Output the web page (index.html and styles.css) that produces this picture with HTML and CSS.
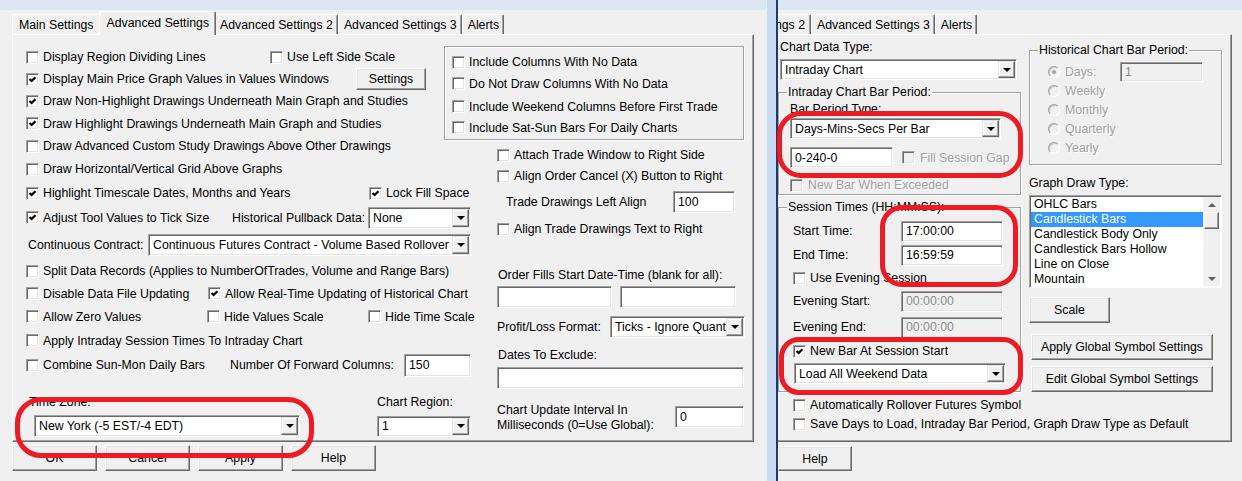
FILE: index.html
```html
<!DOCTYPE html>
<html lang="en">
<head>
    <meta charset="UTF-8">
    <meta name="viewport" content="width=device-width, initial-scale=1.0">
    <title>Chart Settings</title>
    <link rel="stylesheet" href="styles.css">
</head>
<body>
<div class="screen">
    <!-- left window: Advanced Settings tab -->
    <div class="dialog dlg-left">
        <div class="frame-top"></div>
        <div class="body">
            <div class="tabs">
                <div class="tab">Main Settings</div>
                <div class="tab active">Advanced Settings</div>
                <div class="tab">Advanced Settings 2</div>
                <div class="tab">Advanced Settings 3</div>
                <div class="tab">Alerts</div>
            </div>
            <div class="panel">
                <div class="col-a">
                    <div class="row">
                        <label class="chk w-dividing"><span class="cb"></span>Display Region Dividing Lines</label>
                        <label class="chk"><span class="cb"></span>Use Left Side Scale</label>
                    </div>
                    <div class="row">
                        <label class="chk w-values"><span class="cb"><svg viewBox="0 0 7 7"><polyline points="0.6,3 2.6,5 6.4,1.2"/></svg></span>Display Main Price Graph Values in Values Windows</label>
                        <div class="btn btn-settings">Settings</div>
                    </div>
                    <div class="row">
                        <label class="chk"><span class="cb"><svg viewBox="0 0 7 7"><polyline points="0.6,3 2.6,5 6.4,1.2"/></svg></span>Draw Non-Highlight Drawings Underneath Main Graph and Studies</label>
                    </div>
                    <div class="row">
                        <label class="chk"><span class="cb"><svg viewBox="0 0 7 7"><polyline points="0.6,3 2.6,5 6.4,1.2"/></svg></span>Draw Highlight Drawings Underneath Main Graph and Studies</label>
                    </div>
                    <div class="row">
                        <label class="chk"><span class="cb"></span>Draw Advanced Custom Study Drawings Above Other Drawings</label>
                    </div>
                    <div class="row">
                        <label class="chk"><span class="cb"></span>Draw Horizontal/Vertical Grid Above Graphs</label>
                    </div>
                    <div class="row">
                        <label class="chk w-timescale"><span class="cb"><svg viewBox="0 0 7 7"><polyline points="0.6,3 2.6,5 6.4,1.2"/></svg></span>Highlight Timescale Dates, Months and Years</label>
                        <label class="chk"><span class="cb"><svg viewBox="0 0 7 7"><polyline points="0.6,3 2.6,5 6.4,1.2"/></svg></span>Lock Fill Space</label>
                    </div>
                    <div class="row">
                        <label class="chk w-tick"><span class="cb"><svg viewBox="0 0 7 7"><polyline points="0.6,3 2.6,5 6.4,1.2"/></svg></span>Adjust Tool Values to Tick Size</label>
                        <span class="w-pullback">Historical Pullback Data:</span>
                        <div class="combo combo-pullback"><span class="combo-text">None</span><span class="combo-btn"></span></div>
                    </div>
                    <div class="row">
                        <span class="w-contract">Continuous Contract:</span>
                        <div class="combo combo-contract"><span class="combo-text">Continuous Futures Contract - Volume Based Rollover</span><span class="combo-btn"></span></div>
                    </div>
                    <div class="row">
                        <label class="chk"><span class="cb"></span>Split Data Records (Applies to NumberOfTrades, Volume and Range Bars)</label>
                    </div>
                    <div class="row">
                        <label class="chk w-disable"><span class="cb"></span>Disable Data File Updating</label>
                        <label class="chk"><span class="cb"><svg viewBox="0 0 7 7"><polyline points="0.6,3 2.6,5 6.4,1.2"/></svg></span>Allow Real-Time Updating of Historical Chart</label>
                    </div>
                    <div class="row">
                        <label class="chk w-zero"><span class="cb"></span>Allow Zero Values</label>
                        <label class="chk w-hidevalues"><span class="cb"></span>Hide Values Scale</label>
                        <label class="chk"><span class="cb"></span>Hide Time Scale</label>
                    </div>
                    <div class="row">
                        <label class="chk"><span class="cb"></span>Apply Intraday Session Times To Intraday Chart</label>
                    </div>
                    <div class="row">
                        <label class="chk w-sunmon"><span class="cb"></span>Combine Sun-Mon Daily Bars</label>
                        <span class="w-forward">Number Of Forward Columns:</span>
                        <div class="field field-forward">150</div>
                    </div>
                    <div class="row row-labels">
                        <span class="w-timezone">Time Zone:</span>
                        <span>Chart Region:</span>
                    </div>
                    <div class="row">
                        <div class="combo combo-tz"><span class="combo-text">New York (-5 EST/-4 EDT)</span><span class="combo-btn"></span></div>
                        <div class="combo combo-region"><span class="combo-text">1</span><span class="combo-btn"></span></div>
                    </div>
                </div>

                <div class="col-b">
                    <div class="box-nodata">
                        <div class="row"><label class="chk"><span class="cb"></span>Include Columns With No Data</label></div>
                        <div class="row"><label class="chk"><span class="cb"></span>Do Not Draw Columns With No Data</label></div>
                        <div class="row"><label class="chk"><span class="cb"></span>Include Weekend Columns Before First Trade</label></div>
                        <div class="row"><label class="chk"><span class="cb"></span>Include Sat-Sun Bars For Daily Charts</label></div>
                    </div>
                    <div class="row ind53 pt5"><label class="chk"><span class="cb"></span>Attach Trade Window to Right Side</label></div>
                    <div class="row ind53"><label class="chk"><span class="cb"></span>Align Order Cancel (X) Button to Right</label></div>
                    <div class="row ind62">
                        <span class="w-leftalign">Trade Drawings Left Align</span>
                        <div class="field field-leftalign">100</div>
                    </div>
                    <div class="row ind53"><label class="chk"><span class="cb"></span>Align Trade Drawings Text to Right</label></div>
                    <div class="row row-bottom ind54">Order Fills Start Date-Time (blank for all):</div>
                    <div class="row ind53">
                        <div class="field field-fill1"></div>
                        <div class="field field-fill2"></div>
                    </div>
                    <div class="row ind53">
                        <span class="w-profit">Profit/Loss Format:</span>
                        <div class="combo combo-profit"><span class="combo-text">Ticks - Ignore Quantity</span><span class="combo-btn"></span></div>
                    </div>
                    <div class="row ind54">Dates To Exclude:</div>
                    <div class="row ind53"><div class="field field-dates"></div></div>
                    <div class="row row-top ind53">
                        <div class="w-interval">Chart Update Interval In<br>Milliseconds (0=Use Global):</div>
                        <div class="field field-interval">0</div>
                    </div>
                </div>
            </div>
            <div class="buttons">
                <div class="btn btn-main">OK</div>
                <div class="btn btn-main">Cancel</div>
                <div class="btn btn-main">Apply</div>
                <div class="btn btn-main">Help</div>
            </div>
        </div>
    </div>

    <div class="divider"></div>

    <!-- right window: Main Settings tab, cropped on the left -->
    <div class="dialog dlg-right">
        <div class="frame-top"></div>
        <div class="body">
            <div class="tabs">
                <div class="tab tab-cut"><span>Advanced Settings 2</span></div>
                <div class="tab">Advanced Settings 3</div>
                <div class="tab">Alerts</div>
            </div>
            <div class="panel">
                <div class="col-c">
                    <div class="row h22 ind2">Chart Data Type:</div>
                    <div class="combo combo-cdt"><span class="combo-text">Intraday Chart</span><span class="combo-btn"></span></div>

                    <div class="grp grp-intraday">
                        <span class="grp-title">Intraday Chart Bar Period:</span>
                        <div class="row h17 ind11">Bar Period Type:</div>
                        <div class="combo combo-bpt"><span class="combo-text">Days-Mins-Secs Per Bar</span><span class="combo-btn"></span></div>
                        <div class="row row-period ind11">
                            <div class="field field-period">0-240-0</div>
                            <label class="chk off"><span class="cb"></span>Fill Session Gap</label>
                        </div>
                        <div class="row row-exceeded ind11"><label class="chk off"><span class="cb"></span>New Bar When Exceeded</label></div>
                    </div>

                    <div class="grp grp-session">
                        <span class="grp-title">Session Times (HH:MM:SS):</span>
                        <div class="row h24 ind14 mt4"><span class="w-time">Start Time:</span><div class="field field-time">17:00:00</div></div>
                        <div class="row h24 ind14"><span class="w-time">End Time:</span><div class="field field-time">16:59:59</div></div>
                        <div class="row h22 ind14"><label class="chk"><span class="cb"></span>Use Evening Session</label></div>
                        <div class="row h24 ind14"><span class="w-time">Evening Start:</span><div class="field field-time off">00:00:00</div></div>
                        <div class="row h24 ind14 mt2"><span class="w-time">Evening End:</span><div class="field field-time off">00:00:00</div></div>
                        <div class="row h24 ind14"><label class="chk"><span class="cb"><svg viewBox="0 0 7 7"><polyline points="0.6,3 2.6,5 6.4,1.2"/></svg></span>New Bar At Session Start</label></div>
                        <div class="combo combo-weekend"><span class="combo-text">Load All Weekend Data</span><span class="combo-btn"></span></div>
                    </div>

                    <div class="row h18 ind15 mt4"><label class="chk"><span class="cb"></span>Automatically Rollover Futures Symbol</label></div>
                    <div class="row h20 ind15"><label class="chk"><span class="cb"></span>Save Days to Load, Intraday Bar Period, Graph Draw Type as Default</label></div>
                </div>

                <div class="col-d">
                    <div class="grp grp-hist">
                        <span class="grp-title">Historical Chart Bar Period:</span>
                        <div class="radios">
                            <div class="row h19 ind18">
                                <label class="rad w-days"><span class="radio on"></span>Days:</label>
                                <div class="field field-days off">1</div>
                            </div>
                            <div class="row h19 ind18"><label class="rad"><span class="radio"></span>Weekly</label></div>
                            <div class="row h19 ind18"><label class="rad"><span class="radio"></span>Monthly</label></div>
                            <div class="row h19 ind18"><label class="rad"><span class="radio"></span>Quarterly</label></div>
                            <div class="row h19 ind18"><label class="rad"><span class="radio"></span>Yearly</label></div>
                        </div>
                    </div>
                    <div class="row row-gdt">Graph Draw Type:</div>
                    <div class="listbox">
                        <div class="list-items">
                            <div class="list-item">OHLC Bars</div>
                            <div class="list-item sel">Candlestick Bars</div>
                            <div class="list-item">Candlestick Body Only</div>
                            <div class="list-item">Candlestick Bars Hollow</div>
                            <div class="list-item">Line on Close</div>
                            <div class="list-item">Mountain</div>
                        </div>
                        <div class="vscroll">
                            <span class="arrow-up"></span>
                            <span class="thumb"></span>
                            <span class="track"></span>
                            <span class="arrow-down"></span>
                        </div>
                    </div>
                    <div class="btn btn-scale">Scale</div>
                    <div class="btn btn-global">Apply Global Symbol Settings</div>
                    <div class="btn btn-global mt6">Edit Global Symbol Settings</div>
                </div>
            </div>
            <div class="buttons">
                <div class="btn btn-help">Help</div>
            </div>
        </div>
    </div>

    <!-- hand drawn highlight marks -->
    <div class="oval oval-tz"></div>
    <div class="oval oval-period"></div>
    <div class="oval oval-session"></div>
    <div class="oval oval-newbar"></div>
</div>
</body>
</html>
```

FILE: styles.css
```css
body {
    margin: 0;
    background-color: #f0f0f0;
    font-family: "Liberation Sans", Arial, sans-serif;
    font-size: 12.3px;
    color: #000;
}
.screen {
    position: relative;
    display: flex;
    width: 1242px;
    height: 481px;
    overflow: hidden;
}
.dialog {
    flex-shrink: 0;
    overflow: hidden;
}
.dlg-left {
    width: 766px;
}
.dlg-right {
    width: 464px;
}
.frame-top {
    height: 10px;
    background-color: #dde7f3;
}
.dlg-left .body {
    padding-left: 12px;
}
.divider {
    width: 9px;
    flex-shrink: 0;
    background-color: #c8dbf0;
    border-left: 1px solid #e6eef7;
    border-right: 2px solid #1d3b70;
}

/* tabs */
.tabs {
    display: flex;
    align-items: flex-end;
    height: 24px;
}
.tab {
    height: 20px;
    box-sizing: border-box;
    padding: 2px 4px 0 5px;
    line-height: 16px;
    border: 1px solid #fff;
    border-right-color: #696969;
    border-bottom: none;
    border-radius: 2px 2px 0 0;
    box-shadow: inset -1px 0 #a0a0a0;
    white-space: nowrap;
}
.tab:first-child {
    padding: 2px 6px 0;
}
.tab.active {
    position: relative;
    z-index: 1;
    height: 24px;
    margin: 0 -2px -1px;
    padding: 3px 6px 0 7px;
    background-color: #f0f0f0;
}
.tab-cut,
.tab-cut:first-child {
    display: flex;
    justify-content: flex-end;
    width: 33px;
    overflow: hidden;
    padding: 2px 5px 0 0;
    border-left: none;
    border-radius: 0 2px 0 0;
}
.tab-cut span {
    flex-shrink: 0;
}

/* tab page */
.panel {
    display: flex;
    box-sizing: border-box;
    height: 408px;
    border: 1px solid;
    border-color: #fff #696969 #696969 #fff;
    box-shadow: inset -1px -1px #a0a0a0;
}
.dlg-left .panel {
    width: 742px;
}
.dlg-right .panel {
    width: 454px;
    border-left: none;
}
.row {
    display: flex;
    align-items: center;
    white-space: nowrap;
}
.row-bottom {
    align-items: flex-end;
    padding-bottom: 4px;
    box-sizing: border-box;
}
.row-top {
    align-items: flex-start;
    padding-top: 14px;
    box-sizing: border-box;
}
.col-a {
    display: grid;
    grid-template-rows: 22px 22px 22px 23px 22px 24px 24px 25px 30px 22px 23px 23px 25px 24px 35px 28px;
    width: 431px;
    box-sizing: border-box;
    padding: 11px 0 0 13px;
    flex-shrink: 0;
}
.col-b {
    display: grid;
    grid-template-rows: 94px 25px 22px 30px 24px 45px 22px 38px 18px 28px 48px;
    padding-top: 11px;
    width: 306px;
}
.col-c {
    width: 244px;
    padding-top: 1px;
    flex-shrink: 0;
}
.col-d {
    width: 193px;
    margin-left: 7px;
}

/* check boxes */
.chk {
    display: flex;
    align-items: center;
    flex-shrink: 0;
}
.cb {
    display: flex;
    align-items: center;
    justify-content: center;
    width: 13px;
    height: 13px;
    box-sizing: border-box;
    margin-right: 4px;
    background-color: #fff;
    border: 1px solid;
    border-color: #a0a0a0 #fff #fff #a0a0a0;
    box-shadow: inset 1px 1px #696969, inset -1px -1px #e3e3e3;
    flex-shrink: 0;
}
.cb svg {
    width: 7px;
    height: 7px;
    fill: none;
    stroke: #000;
    stroke-width: 2.2;
}
.chk.off {
    color: #a0a0a0;
    text-shadow: 1px 1px 0 #fff;
}
.chk.off .cb {
    background-color: #f0f0f0;
    margin-right: 5px;
}

/* radios */
.rad {
    display: flex;
    align-items: center;
    color: #a0a0a0;
    text-shadow: 1px 1px 0 #fff;
}
.radio {
    position: relative;
    width: 12px;
    height: 12px;
    box-sizing: border-box;
    margin-right: 5px;
    border-radius: 50%;
    border: 1px solid #a0a0a0;
    border-right-color: #fff;
    border-bottom-color: #fff;
    box-shadow: inset 1px 1px #c8c8c8;
    background-color: #f0f0f0;
}
.radio.on::after {
    content: "";
    position: absolute;
    left: 3px;
    top: 3px;
    width: 4px;
    height: 4px;
    border-radius: 50%;
    background-color: #a0a0a0;
}
.radios {
    padding: 4px 0 7px;
}

/* edit fields and combos */
.field {
    display: flex;
    align-items: center;
    box-sizing: border-box;
    padding-left: 4px;
    background-color: #fff;
    border: 1px solid;
    border-color: #a0a0a0 #fff #fff #a0a0a0;
    box-shadow: inset 1px 1px #696969, inset -1px -1px #e3e3e3;
    flex-shrink: 0;
}
.field.off {
    background-color: #f0f0f0;
    color: #8c8c8c;
}
.combo {
    display: flex;
    align-items: stretch;
    box-sizing: border-box;
    padding: 1px 1px 1px 4px;
    background-color: #fff;
    border: 1px solid;
    border-color: #a0a0a0 #fff #fff #a0a0a0;
    box-shadow: inset 1px 1px #696969, inset -1px -1px #e3e3e3;
    flex-shrink: 0;
}
.combo-text {
    display: flex;
    align-items: center;
    flex: 1;
    overflow: hidden;
    white-space: nowrap;
}
.combo-btn {
    display: flex;
    align-items: center;
    justify-content: center;
    width: 17px;
    box-sizing: border-box;
    background-color: #f0f0f0;
    border: 1px solid;
    border-color: #e3e3e3 #696969 #696969 #e3e3e3;
    box-shadow: inset -1px -1px #a0a0a0, inset 1px 1px #fff;
    flex-shrink: 0;
}
.combo-btn::after {
    content: "";
    border-left: 4px solid transparent;
    border-right: 4px solid transparent;
    border-top: 4px solid #000;
}

/* buttons */
.btn {
    display: flex;
    align-items: center;
    justify-content: center;
    box-sizing: border-box;
    background-color: #f0f0f0;
    border: 1px solid;
    border-color: #fff #696969 #696969 #fff;
    box-shadow: inset -1px -1px #a0a0a0, inset 1px 1px #e3e3e3;
    flex-shrink: 0;
    white-space: nowrap;
}
.buttons {
    display: flex;
    gap: 8px;
    margin-top: 3px;
}
.btn-main {
    width: 85px;
    height: 26px;
}
.btn-help {
    width: 74px;
    height: 25px;
    margin-top: 1px;
}
.btn-settings {
    width: 70px;
    height: 22px;
}
.btn-scale {
    width: 81px;
    height: 26px;
    margin-top: 9px;
}
.btn-global {
    width: 182px;
    height: 26px;
    margin: 11px 0 0 2px;
}
.btn-global.mt6 {
    margin-top: 6px;
}

/* left page widths */
.w-dividing { width: 244px; }
.w-values { width: 330px; }
.w-timescale { width: 343px; }
.w-tick { width: 206px; }
.w-pullback { width: 136px; }
.combo-pullback { width: 103px; height: 22px; }
.w-contract { width: 120px; margin-left: 2px; }
.combo-contract { width: 323px; height: 22px; }
.w-disable { width: 182px; }
.w-zero { width: 181px; }
.w-hidevalues { width: 161px; }
.w-sunmon { width: 204px; }
.w-forward { width: 174px; }
.field-forward { width: 67px; height: 23px; }
.row-labels {
    align-items: flex-end;
    padding-bottom: 3px;
}
.w-timezone { width: 348px; margin-left: 3px; }
.combo-tz { width: 266px; height: 22px; margin-left: 8px; }
.combo-region { width: 94px; height: 21px; margin-left: 77px; }

.box-nodata {
    display: grid;
    grid-template-rows: 20px 23px 23px 19px;
    width: 300px;
    box-sizing: border-box;
    padding: 5px 0 0 7px;
    border: 1px solid #a0a0a0;
    box-shadow: inset 1px 1px #fff, 1px 1px #fff;
}
.ind2 { padding-left: 2px; }
.ind11 { padding-left: 11px; }
.ind14 { padding-left: 14px; }
.ind15 { padding-left: 15px; }
.ind18 { padding-left: 18px; }
.ind53 { padding-left: 53px; }
.ind54 { padding-left: 54px; }
.ind62 { padding-left: 62px; }
.pt5 { padding-top: 5px; }
.mt2 { margin-top: 2px; }
.mt4 { margin-top: 4px; }
.w-leftalign { width: 167px; }
.field-leftalign { width: 62px; height: 22px; }
.field-fill1 { width: 115px; height: 22px; }
.field-fill2 { width: 116px; height: 22px; margin-left: 8px; }
.w-profit { width: 113px; }
.combo-profit { width: 135px; height: 22px; }
.field-dates { width: 247px; height: 22px; }
.w-interval {
    width: 178px;
    line-height: 15px;
    margin-top: -3px;
}
.field-interval { width: 69px; height: 22px; }

/* right page */
.h17 { height: 17px; }
.h18 { height: 18px; }
.h19 { height: 19px; }
.h20 { height: 20px; }
.h22 { height: 22px; }
.h24 { height: 24px; }
.combo-cdt {
    width: 237px;
    height: 21px;
    margin: 1px 0 0 2px;
}
.grp {
    box-sizing: border-box;
    border: 1px solid #a0a0a0;
    box-shadow: inset 1px 1px #fff, 1px 1px #fff;
}
.grp-title {
    display: block;
    width: max-content;
    margin: -8px 0 0 8px;
    padding: 0 1px;
    line-height: 15px;
    background-color: #f0f0f0;
}
.grp-intraday {
    width: 243px;
    margin-top: 12px;
}
.combo-bpt {
    width: 211px;
    height: 21px;
    margin: 1px 0 0 11px;
}
.row-period {
    margin-top: 8px;
    height: 21px;
}
.field-period {
    width: 103px;
    height: 21px;
    margin-right: 9px;
}
.row-exceeded {
    margin-top: 8px;
    height: 18px;
}
.grp-session {
    width: 243px;
    margin-top: 12px;
    padding-bottom: 7px;
}
.w-time { width: 108px; }
.field-time { width: 102px; height: 21px; }
.combo-weekend {
    width: 212px;
    height: 21px;
    margin-left: 15px;
}

.grp-hist {
    width: 193px;
    margin-top: 15px;
}
.w-days { width: 72px; }
.field-days { width: 83px; height: 20px; }
.row-gdt {
    height: 30px;
    align-items: flex-end;
    padding-bottom: 5px;
    box-sizing: border-box;
}
.listbox {
    display: flex;
    width: 193px;
    height: 93px;
    box-sizing: border-box;
    background-color: #fff;
    border: 1px solid;
    border-color: #a0a0a0 #fff #fff #a0a0a0;
    box-shadow: inset 1px 1px #696969;
}
.list-items {
    flex: 1;
    padding: 1px 0 0 1px;
}
.list-item {
    height: 15px;
    line-height: 15px;
    padding-left: 3px;
    white-space: nowrap;
}
.list-item.sel {
    background-color: #3399ff;
    color: #fff;
}
.vscroll {
    display: flex;
    flex-direction: column;
    align-items: center;
    width: 17px;
    margin: 1px 1px 1px 0;
    background-color: #f0f0f0;
}
.arrow-up,
.arrow-down {
    display: flex;
    align-items: center;
    justify-content: center;
    height: 15px;
}
.arrow-up::after {
    content: "";
    border-left: 4px solid transparent;
    border-right: 4px solid transparent;
    border-bottom: 4px solid #606060;
}
.arrow-down::after {
    content: "";
    border-left: 4px solid transparent;
    border-right: 4px solid transparent;
    border-top: 4px solid #606060;
}
.thumb {
    width: 15px;
    height: 17px;
    box-sizing: border-box;
    background-color: #f0f0f0;
    border: 1px solid;
    border-color: #fff #696969 #696969 #fff;
    box-shadow: inset -1px -1px #a0a0a0;
}
.track {
    flex: 1;
}

/* red marker ovals drawn over the screenshot */
.oval {
    position: absolute;
    z-index: 5;
    border: 5px solid #ed1c24;
    pointer-events: none;
}
.oval-tz {
    left: 15px;
    top: 397px;
    width: 289px;
    height: 51px;
    border-radius: 26px;
}
.oval-period {
    left: 777px;
    top: 111px;
    width: 236px;
    height: 57px;
    border-radius: 24px;
}
.oval-session {
    left: 880px;
    top: 205px;
    width: 128px;
    height: 72px;
    border-radius: 22px;
}
.oval-newbar {
    left: 779px;
    top: 337px;
    width: 234px;
    height: 48px;
    border-radius: 20px;
}
```
